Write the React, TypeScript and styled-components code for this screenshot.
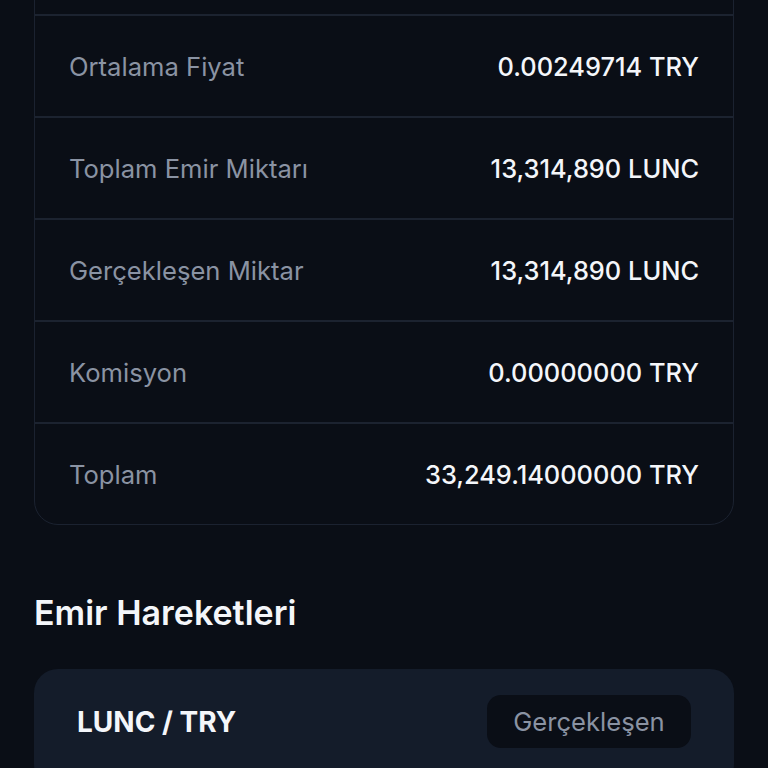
import React from "react";
import styled, { createGlobalStyle } from "styled-components";

const Global = createGlobalStyle`
  html, body { margin: 0; padding: 0; background: #0a0e16; }
  body { font-family: Inter, "Noto Sans", sans-serif; -webkit-font-smoothing: antialiased; }
`;

const Page = styled.div`
  width: 768px;
  height: 768px;
  overflow: hidden;
  background: #0a0e16;
  box-sizing: border-box;
  padding: 0 34px;
`;

const DetailCard = styled.div`
  margin-top: -87px;
  border: 1px solid #1b2230;
  border-radius: 24px;
  overflow: hidden;
`;

const Row = styled.div`
  height: 100px;
  display: flex;
  align-items: center;
  justify-content: space-between;
  padding: 0 34px;
  & + & { border-top: 2px solid #1c2330; }
`;

const Label = styled.span`
  font-size: 25.6px;
  color: #8a93a3;
`;

const Value = styled.span`
  font-size: 25.4px;
  color: #f4f6fa;
  font-weight: 450;
`;

const Heading = styled.h2`
  margin: 66px 0 0;
  font-size: 34px;
  line-height: 44px;
  font-weight: 600;
  color: #f4f6fa;
`;

const TradeCard = styled.div`
  margin-top: 34px;
  background: #141c2a;
  border-radius: 24px;
  padding: 26px 43px 40px;
`;

const TradeHeader = styled.div`
  display: flex;
  align-items: center;
  justify-content: space-between;
`;

const Pair = styled.span`
  font-size: 28px;
  font-weight: 700;
  color: #f4f6fa;
`;

const Badge = styled.span`
  display: inline-flex;
  align-items: center;
  justify-content: center;
  height: 53px;
  width: 204px;
  box-sizing: border-box;
  border-radius: 14px;
  background: #0a0e16;
  color: #8a93a3;
  font-size: 25.6px;
`;

const rows: [string, string][] = [
  ["Ortalama Fiyat", "0.00249714 TRY"],
  ["Toplam Emir Miktarı", "13,314,890 LUNC"],
  ["Gerçekleşen Miktar", "13,314,890 LUNC"],
  ["Komisyon", "0.00000000 TRY"],
  ["Toplam", "33,249.14000000 TRY"],
];

export default function App() {
  return (
    <>
      <Global />
      <Page>
        <DetailCard>
          <Row />
          {rows.map(([l, v]) => (
            <Row key={l}>
              <Label>{l}</Label>
              <Value>{v}</Value>
            </Row>
          ))}
        </DetailCard>
        <Heading>Emir Hareketleri</Heading>
        <TradeCard>
          <TradeHeader>
            <Pair>LUNC / TRY</Pair>
            <Badge>Gerçekleşen</Badge>
          </TradeHeader>
        </TradeCard>
      </Page>
    </>
  );
}
